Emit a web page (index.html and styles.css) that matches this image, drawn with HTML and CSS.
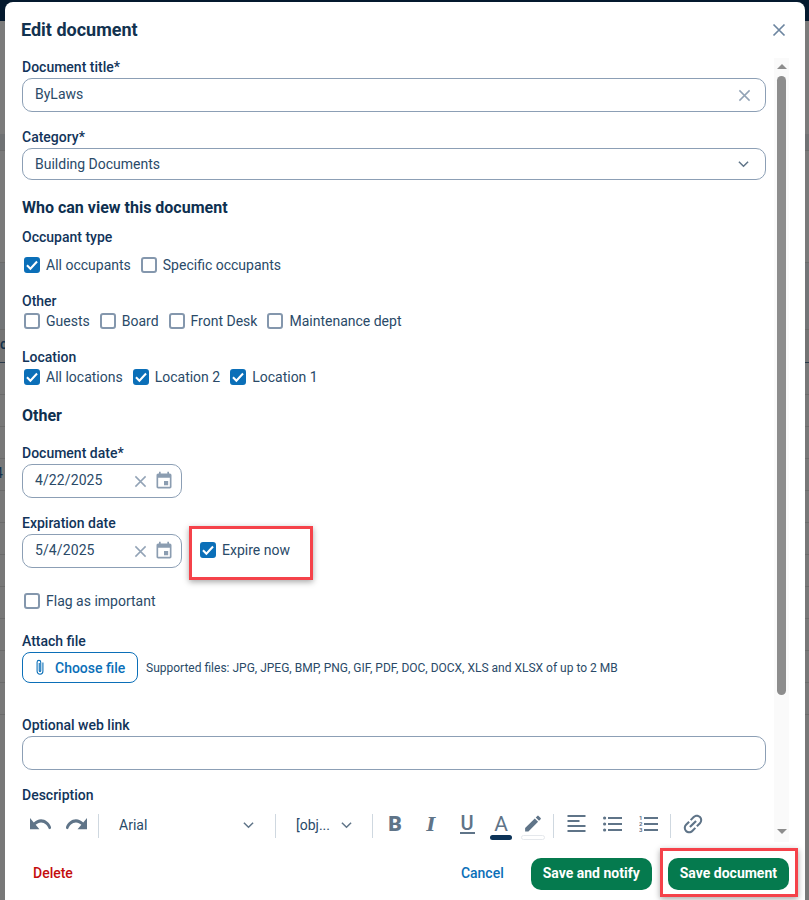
FILE: index.html
```html
<!DOCTYPE html>
<html lang="en">
<head>
<meta charset="utf-8">
<title>Edit document</title>
<link rel="stylesheet" href="styles.css">
</head>
<body>
<div class="backdrop">
  <div class="bd-top"></div>
  <div class="bd-row bd-a"></div>
  <div class="bd-row bd-b"></div>
  <div class="bd-row bd-c"></div>
  <div class="bd-row bd-d"><span class="bd-text bd-t">t</span></div>
  <div class="bd-row bd-e"><span class="bd-text bd-oc">oc</span></div>
  <div class="bd-row bd-f"></div>
  <div class="bd-row bd-f"></div>
  <div class="bd-row bd-f"></div>
  <div class="bd-row bd-f"><span class="bd-text bd-four">4</span></div>
  <div class="bd-row bd-f"></div>
  <div class="bd-row bd-f"></div>
  <div class="bd-row bd-f"></div>
  <div class="bd-row bd-f"></div>
  <div class="bd-row bd-f"></div>
  <div class="bd-row bd-f"></div>
  <div class="bd-row bd-f"></div>
</div>

<main class="modal">
  <header class="modal-head">
    <h1 class="modal-title">Edit document</h1>
    <svg class="close-icon" viewBox="0 0 14 14"><path d="M1.5 1.5l11 11M12.5 1.5l-11 11"/></svg>
  </header>

  <div class="scroll">
    <form class="form">
      <div class="label">Document title*</div>
      <div class="input tall">
        <span class="value">ByLaws</span>
        <svg class="clear-icon" viewBox="0 0 14 14"><path d="M1.5 1.5l11 11M12.5 1.5l-11 11"/></svg>
      </div>

      <div class="label gap-16">Category*</div>
      <div class="input short">
        <span class="value">Building Documents</span>
        <svg class="chev chev-field" viewBox="0 0 12 8"><path d="M1 1.5l5 5 5-5"/></svg>
      </div>

      <h2 class="section gap-18">Who can view this document</h2>
      <div class="label gap-10">Occupant type</div>
      <div class="checks gap-9">
        <span class="check"><span class="box on"><svg viewBox="0 0 14 14"><path d="M2.6 7.2l3 3L11.4 4"/></svg></span>All occupants</span>
        <span class="check"><span class="box"></span>Specific occupants</span>
      </div>

      <div class="label gap-17">Other</div>
      <div class="checks gap-1">
        <span class="check"><span class="box"></span>Guests</span>
        <span class="check"><span class="box"></span>Board</span>
        <span class="check"><span class="box"></span>Front Desk</span>
        <span class="check"><span class="box"></span>Maintenance dept</span>
      </div>

      <div class="label gap-17">Location</div>
      <div class="checks gap-1">
        <span class="check"><span class="box on"><svg viewBox="0 0 14 14"><path d="M2.6 7.2l3 3L11.4 4"/></svg></span>All locations</span>
        <span class="check"><span class="box on"><svg viewBox="0 0 14 14"><path d="M2.6 7.2l3 3L11.4 4"/></svg></span>Location 2</span>
        <span class="check"><span class="box on"><svg viewBox="0 0 14 14"><path d="M2.6 7.2l3 3L11.4 4"/></svg></span>Location 1</span>
      </div>

      <h2 class="section gap-19">Other</h2>
      <div class="label gap-18">Document date*</div>
      <div class="input tall date">
        <span class="value">4/22/2025</span>
        <svg class="clear-icon date-clear" viewBox="0 0 14 14"><path d="M1.5 1.5l11 11M12.5 1.5l-11 11"/></svg>
        <svg class="cal" viewBox="0 0 24 24"><path d="M17 12h-5v5h5v-5zM16 1v2H8V1H6v2H5c-1.11 0-1.99.9-1.99 2L3 19c0 1.1.89 2 2 2h14c1.1 0 2-.9 2-2V5c0-1.1-.9-2-2-2h-1V1h-2zm3 18H5V8h14v11z"/></svg>
      </div>

      <div class="label gap-16">Expiration date</div>
      <div class="exp-row">
        <div class="input tall date">
          <span class="value">5/4/2025</span>
          <svg class="clear-icon date-clear" viewBox="0 0 14 14"><path d="M1.5 1.5l11 11M12.5 1.5l-11 11"/></svg>
          <svg class="cal" viewBox="0 0 24 24"><path d="M17 12h-5v5h5v-5zM16 1v2H8V1H6v2H5c-1.11 0-1.99.9-1.99 2L3 19c0 1.1.89 2 2 2h14c1.1 0 2-.9 2-2V5c0-1.1-.9-2-2-2h-1V1h-2zm3 18H5V8h14v11z"/></svg>
        </div>
        <span class="check expire"><span class="box on"><svg viewBox="0 0 14 14"><path d="M2.6 7.2l3 3L11.4 4"/></svg></span>Expire now</span>
      </div>

      <div class="checks gap-23">
        <span class="check"><span class="box"></span>Flag as important</span>
      </div>

      <div class="label gap-21">Attach file</div>
      <div class="attach-row">
        <span class="choose">
          <svg class="clip" viewBox="0 0 12 20"><path d="M9.5 4v10.6a3.5 3.5 0 0 1-7 0V3.6a2.2 2.2 0 0 1 4.4 0v10.2a.9.9 0 0 1-1.8 0V4.5"/></svg>
          Choose file
        </span>
        <span class="hint">Supported files: JPG, JPEG, BMP, PNG, GIF, PDF, DOC, DOCX, XLS and XLSX of up to 2 MB</span>
      </div>

      <div class="label gap-33">Optional web link</div>
      <div class="input tall"></div>

      <div class="label gap-16">Description</div>
      <div class="toolbar">
        <span class="tool"><svg class="hist" viewBox="2 7 20 9.5" preserveAspectRatio="none"><path d="M12.5 8c-2.65 0-5.05.99-6.9 2.6L2 7v9h9l-3.62-3.62c1.39-1.16 3.16-1.88 5.12-1.88 3.54 0 6.55 2.31 7.6 5.5l2.37-.78C21.08 11.03 17.15 8 12.5 8z"/></svg></span>
        <span class="tool"><svg class="hist" viewBox="2 7 20 9.5" preserveAspectRatio="none"><path d="M18.4 10.6C16.55 8.99 14.15 8 11.5 8c-4.65 0-8.58 3.03-9.96 7.22L3.9 16c1.05-3.19 4.05-5.5 7.6-5.5 1.95 0 3.73.72 5.12 1.88L13 16h9V7l-3.6 3.6z"/></svg></span>
        <span class="sep sep-first"></span>
        <span class="select font-select">Arial<svg class="chev" viewBox="0 0 12 8"><path d="M1 1.5l5 5 5-5"/></svg></span>
        <span class="sep"></span>
        <span class="select size-select">[obj...<svg class="chev" viewBox="0 0 12 8"><path d="M1 1.5l5 5 5-5"/></svg></span>
        <span class="sep sep-gap"></span>
        <span class="tool"><span class="glyph bold">B</span></span>
        <span class="tool"><span class="glyph ital">I</span></span>
        <span class="tool"><span class="glyph under">U</span></span>
        <span class="tool narrow">
          <span class="glyph letter">A</span>
          <span class="swatch dark"></span>
        </span>
        <span class="tool narrow">
          <svg class="ico" viewBox="0 0 24 24"><path d="M3 17.25V21h3.75L17.81 9.94l-3.75-3.75L3 17.25zM20.71 7.04a1 1 0 0 0 0-1.41l-2.34-2.34a1 1 0 0 0-1.41 0l-1.83 1.83 3.75 3.75 1.83-1.83z"/></svg>
          <span class="swatch blank"></span>
        </span>
        <span class="sep sep-gap sep-mid"></span>
        <span class="tool"><svg class="lines" viewBox="0 0 18 18"><path d="M0 1h18M0 6h12M0 11h18M0 16h18" /></svg></span>
        <span class="tool"><svg class="lines" viewBox="0 0 19 18"><circle cx="1.6" cy="3" r="1.6"/><circle cx="1.6" cy="9" r="1.6"/><circle cx="1.6" cy="15" r="1.6"/><path d="M5 3h14M5 9h14M5 15h14"/></svg></span>
        <span class="tool"><svg class="lines" viewBox="0 0 19 18"><text x="0" y="5" class="num">1</text><text x="0" y="11" class="num">2</text><text x="0" y="17" class="num">3</text><path d="M5 3h14M5 9h14M5 15h14"/></svg></span>
        <span class="sep sep-last"></span>
        <span class="tool"><svg class="ico link" viewBox="0 0 24 24"><path transform="rotate(-45 12 12)" d="M3.9 12c0-1.71 1.39-3.1 3.1-3.1h4V7H7c-2.76 0-5 2.24-5 5s2.24 5 5 5h4v-1.9H7c-1.71 0-3.1-1.39-3.1-3.1zM8 13h8v-2H8v2zm9-6h-4v1.9h4c1.71 0 3.1 1.39 3.1 3.1s-1.39 3.1-3.1 3.1h-4V17h4c2.76 0 5-2.24 5-5s-2.24-5-5-5z"/></svg></span>
      </div>
    </form>

    <div class="scrollbar">
      <span class="arrow up"></span>
      <span class="thumb"></span>
      <span class="arrow down"></span>
    </div>
  </div>

  <footer class="modal-foot">
    <span class="delete">Delete</span>
    <span class="cancel">Cancel</span>
    <span class="btn">Save and notify</span>
    <span class="btn">Save document</span>
  </footer>
</main>

<div class="mark mark-expire"></div>
<div class="mark mark-save"></div>
</body>
</html>
```
FILE: styles.css
```css
* { box-sizing: border-box; }

html, body {
  margin: 0;
  height: 900px;
  overflow: hidden;
}

body {
  position: relative;
  background: #787878;
  font-family: Roboto, "Liberation Sans", sans-serif;
  color: #2a4a68;
  font-size: 14px;
}

/* dimmed page behind the dialog */
.backdrop {
  position: absolute;
  inset: 0;
  display: flex;
  flex-direction: column;
}
.bd-top { height: 21px; background: #04192e; flex: none; }
.bd-row { flex: none; border-bottom: 1px solid #6b6b6b; position: relative; overflow: hidden; }
.bd-a { height: 113px; background: #7b7b7b; border: 0; }
.bd-b { height: 17px; background: #707274; }
.bd-c { height: 112px; background: #7a7a7a; }
.bd-d { height: 67px; background: #737577; }
.bd-e { height: 33px; background: #747474; border-bottom: 1px solid #2a3a4a; }
.bd-f { height: 32px; }
.bd-text {
  font-size: 14px;
  color: #12304c;
  line-height: 16px;
  display: block;
  margin: 16px 0 0 -5px;
}
.bd-t { margin-top: 24px; }
.bd-oc { margin-top: 6px; margin-left: -8px; font-weight: 500; }
.bd-four { margin-top: 6px; }

/* dialog */
.modal {
  position: absolute;
  left: 5px;
  top: 2px;
  width: 800px;
  height: 898px;
  background: #fff;
  border-radius: 8px 8px 0 0;
  display: flex;
  flex-direction: column;
}

.modal-head {
  height: 56px;
  flex: none;
  padding: 16px 20px 0 16px;
  display: flex;
  justify-content: space-between;
}
.modal-title {
  margin: 0;
  font-size: 18px;
  line-height: 24px;
  font-weight: 700;
  color: #12324f;
}
.close-icon {
  width: 14px;
  height: 14px;
  margin-top: 5px;
  margin-right: -1px;
  fill: none;
  stroke: #6d85a0;
  stroke-width: 1.7;
}

.scroll {
  height: 784px;
  flex: none;
  display: flex;
  padding-left: 17px;
  overflow: hidden;
}

.form { width: 744px; flex: none; }

.label {
  font-size: 14px;
  line-height: 18px;
  font-weight: 500;
  color: #12345a;
  margin-bottom: 2px;
}
.section {
  margin: 0;
  font-size: 16px;
  line-height: 20px;
  font-weight: 700;
  color: #0e3050;
}

.gap-16 { margin-top: 16px; }
.gap-17 { margin-top: 17px; }
.gap-18 { margin-top: 18px; }
.gap-10 { margin-top: 10px; }
.gap-19 { margin-top: 19px; }
.gap-21 { margin-top: 21px; }
.gap-33 { margin-top: 33px; }
.gap-9 { margin-top: 9px; }
.gap-1 { margin-top: -1px; }
.gap-23 { margin-top: 23px; }

.input {
  border: 1px solid #8c9fb5;
  border-radius: 10px;
  display: flex;
  align-items: center;
  justify-content: space-between;
  padding: 0 14px 0 12px;
  background: #fff;
}
.tall { height: 34px; }
.short { height: 32px; }
.date { width: 160px; padding-right: 7px; flex: none; }
.value { color: #2a4a68; font-size: 14px; }
.tall .value { margin-bottom: 2px; }
.date .value { letter-spacing: 0.1px; }

.clear-icon {
  width: 13px;
  height: 13px;
  fill: none;
  stroke: #92a3b6;
  stroke-width: 1.6;
}
.date-clear { margin-left: auto; margin-right: 7px; }
.cal { width: 20px; height: 20px; fill: #8b9db1; }

.chev {
  width: 11px;
  height: 8px;
  fill: none;
  stroke: #5f7488;
  stroke-width: 1.6;
}
.chev-field { margin-right: 2px; }

.checks { display: flex; align-items: center; gap: 10px; height: 20px; }
.check { display: inline-flex; align-items: center; line-height: 20px; color: #2a4a68; }
.box {
  width: 16px;
  height: 16px;
  margin: 0 6px 0 2px;
  flex: none;
  border: 2px solid #8497ad;
  border-radius: 3px;
  background: #fff;
  display: inline-flex;
}
.check + .check .box { margin-left: 0; }
.box.on { background: #0b6fb8; border-color: #0b6fb8; }
.box svg {
  width: 16px;
  height: 16px;
  margin: -2px;
  flex: none;
  fill: none;
  stroke: #fff;
  stroke-width: 1.8;
}

.exp-row { display: flex; align-items: center; gap: 18px; }
.expire { margin-bottom: 2px; }
.expire .box { margin: 0 6px 0 0; }

.attach-row { display: flex; align-items: center; gap: 8px; }
.choose {
  width: 116px;
  height: 31px;
  border: 1px solid #0b6fb8;
  border-radius: 8px;
  display: flex;
  align-items: center;
  padding-left: 12px;
  gap: 10px;
  color: #0b6fb8;
  font-weight: 500;
  font-size: 14px;
  flex: none;
}
.clip { width: 10px; height: 17px; fill: none; stroke: #0b6fb8; stroke-width: 1.3; }
.hint { font-size: 12px; color: #2a4a68; }

/* editor toolbar */
.toolbar { display: flex; align-items: flex-start; height: 28px; margin-top: 8px; }
.tool {
  width: 36px;
  height: 28px;
  flex: none;
  display: flex;
  flex-direction: column;
  align-items: center;
  color: #5f7488;
}
.tool.narrow { width: 32px; }
.tool > svg { margin-top: 6px; }
.hist { width: 21px; height: 12px; fill: #5f7488; }
.sep { width: 1px; height: 24px; margin-top: 2px; background: #cfd8e0; flex: none; }
.sep-first { margin-left: 4px; }
.sep-gap { margin-right: 4px; }
.sep-mid { margin-left: 4px; }
.sep-last { margin-left: 4px; margin-right: 4px; }
.select {
  height: 26px;
  display: flex;
  align-items: center;
  justify-content: space-between;
  padding-left: 20px;
  flex: none;
  color: #2a4a68;
}
.font-select { width: 176px; padding-right: 21px; }
.size-select { width: 96px; padding-right: 20px; }

.glyph { display: block; height: 24px; line-height: 24px; text-align: center; color: #5f7488; }
.bold { font-family: Roboto, sans-serif; font-size: 21px; font-weight: 900; }
.ital { font-family: "DejaVu Serif", serif; font-size: 19px; font-weight: 700; font-style: italic; }
.under {
  font-family: Roboto, sans-serif;
  font-size: 20px;
  font-weight: 500;
  height: 22px;
  line-height: 22px;
  width: 15px;
  border-bottom: 2px solid #5f7488;
}
.letter { font-size: 21px; font-weight: 400; height: 23px; line-height: 24px; }
.swatch { width: 22px; height: 5px; border-radius: 3px; flex: none; }
.swatch.dark { background: #0c3358; }
.swatch.blank { width: 24px; border: 1px solid #e5e8ec; margin-top: 1px; }
.ico { fill: #5f7488; }
.narrow .ico { width: 22px; height: 22px; margin-top: 1px; }
.ico.link { width: 26px; height: 26px; margin-top: -1px; }
.lines {
  width: 19px;
  height: 18px;
  fill: #5f7488;
  stroke: none;
}
.tool > .lines { margin-top: 3px; }
.lines path { stroke: #5f7488; stroke-width: 2; fill: none; }
.num { font-size: 6px; font-family: Roboto, sans-serif; font-weight: 700; fill: #5f7488; }

/* scrollbar */
.scrollbar {
  width: 15px;
  margin-left: 8px;
  flex: none;
  background: #fafafa;
  display: flex;
  flex-direction: column;
  align-items: center;
}
.arrow {
  width: 0;
  height: 0;
  border-left: 5px solid transparent;
  border-right: 5px solid transparent;
  flex: none;
}
.arrow.up { border-bottom: 5px solid #8d8d8d; margin-top: 6px; }
.thumb {
  width: 9px;
  height: 619px;
  margin-top: 7px;
  border-radius: 4.5px;
  background: #8d8d8d;
  flex: none;
}
.arrow.down { border-top: 5px solid #8d8d8d; margin-top: 134px; }

/* footer */
.modal-foot {
  flex: 1;
  display: flex;
  align-items: flex-start;
  padding: 16px 16px 0 17px;
  gap: 16px;
}
.delete {
  color: #c40d0d;
  font-weight: 500;
  line-height: 30px;
  padding-left: 11px;
  margin-right: auto;
}
.cancel {
  color: #0b6fb8;
  font-weight: 500;
  line-height: 30px;
  margin-right: 11px;
}
.btn {
  height: 32px;
  padding: 0 12px;
  border-radius: 10px;
  background: #057a4e;
  color: #fff;
  font-weight: 700;
  line-height: 30px;
  white-space: nowrap;
}

/* red annotations drawn over the screenshot */
.mark {
  position: absolute;
  border: 3px solid #f5424a;
  box-shadow: 0 2px 6px rgba(0, 0, 0, 0.35);
}
.mark-expire { left: 189px; top: 526px; width: 124px; height: 54px; }
.mark-save { left: 660px; top: 848px; width: 138px; height: 49px; }
```
